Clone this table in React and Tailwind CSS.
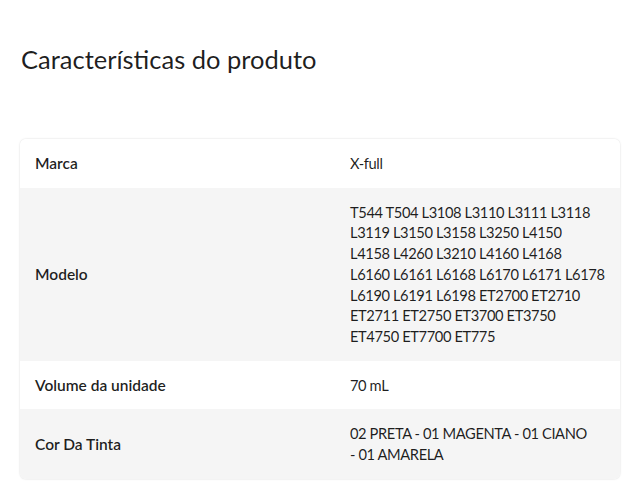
export default function App() {
  const rows = [
    ["Marca", ["X-full"]],
    ["Modelo", [
      "T544 T504 L3108 L3110 L3111 L3118",
      "L3119 L3150 L3158 L3250 L4150",
      "L4158 L4260 L3210 L4160 L4168",
      "L6160 L6161 L6168 L6170 L6171 L6178",
      "L6190 L6191 L6198 ET2700 ET2710",
      "ET2711 ET2750 ET3700 ET3750",
      "ET4750 ET7700 ET775",
    ]],
    ["Volume da unidade", ["70 mL"]],
    ["Cor Da Tinta", ["02 PRETA - 01 MAGENTA - 01 CIANO", "- 01 AMARELA"]],
  ];
  return (
    <div className="w-[640px] h-[490px] bg-white overflow-hidden text-[rgba(0,0,0,0.88)]" style={{ fontFamily: "Lato, 'Noto Sans', sans-serif" }}>
      <div className="pl-[21px] pt-[43px]">
        <h2 className="text-[25.5px] leading-[32px] font-normal">Características do produto</h2>
      </div>
      <div className="mx-[20px] mt-[64px] rounded-[6px] overflow-hidden shadow-[0_0_2px_rgba(0,0,0,0.18)]">
        {rows.map(([k, v], i) => (
          <div key={k} className={`grid grid-cols-[330px_1fr] items-center ${i % 2 ? "bg-[#f5f5f5]" : "bg-white"}`}>
            <div className="pl-[15px] py-[14px] text-[15.5px] leading-[20.7px] font-semibold">{k}</div>
            <div className="pr-[12px] py-[14px] text-[14.7px] leading-[20.7px] tracking-[-0.4px]">
              {v.map((line) => (
                <span key={line} className="block whitespace-nowrap">{line}</span>
              ))}
            </div>
          </div>
        ))}
      </div>
    </div>
  );
}
